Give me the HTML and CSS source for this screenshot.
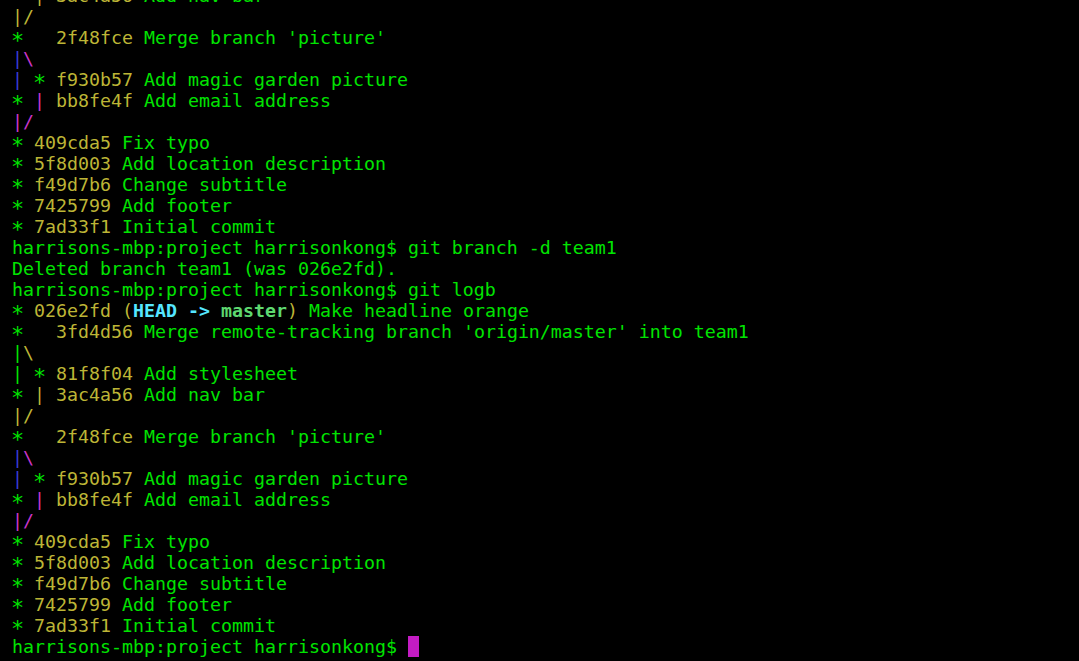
FILE: index.html
```html
<!DOCTYPE html>
<html>
<head>
<meta charset="utf-8">
<link rel="stylesheet" href="styles.css">
</head>
<body>
<pre class="term"><span class="g a">*</span> <span class="y">|</span> <span class="y">3ac4a56</span> <span class="g">Add nav bar</span>
<span class="y">|/</span>
<span class="g a">*</span>   <span class="y">2f48fce</span> <span class="g">Merge branch 'picture'</span>
<span class="b">|</span><span class="m">\</span>
<span class="b">|</span> <span class="g a">*</span> <span class="y">f930b57</span> <span class="g">Add magic garden picture</span>
<span class="g a">*</span> <span class="m">|</span> <span class="y">bb8fe4f</span> <span class="g">Add email address</span>
<span class="m">|/</span>
<span class="g a">*</span> <span class="y">409cda5</span> <span class="g">Fix typo</span>
<span class="g a">*</span> <span class="y">5f8d003</span> <span class="g">Add location description</span>
<span class="g a">*</span> <span class="y">f49d7b6</span> <span class="g">Change subtitle</span>
<span class="g a">*</span> <span class="y">7425799</span> <span class="g">Add footer</span>
<span class="g a">*</span> <span class="y">7ad33f1</span> <span class="g">Initial commit</span>
<span class="g">harrisons-mbp:project harrisonkong$ git branch -d team1</span>
<span class="g">Deleted branch team1 (was 026e2fd).</span>
<span class="g">harrisons-mbp:project harrisonkong$ git logb</span>
<span class="g a">*</span> <span class="y">026e2fd (</span><span class="c">HEAD -&gt; </span><span class="gb">master</span><span class="y">)</span> <span class="g">Make headline orange</span>
<span class="g a">*</span>   <span class="y">3fd4d56</span> <span class="g">Merge remote-tracking branch 'origin/master' into team1</span>
<span class="g">|</span><span class="y">\</span>
<span class="g">|</span> <span class="g a">*</span> <span class="y">81f8f04</span> <span class="g">Add stylesheet</span>
<span class="g a">*</span> <span class="y">|</span> <span class="y">3ac4a56</span> <span class="g">Add nav bar</span>
<span class="y">|/</span>
<span class="g a">*</span>   <span class="y">2f48fce</span> <span class="g">Merge branch 'picture'</span>
<span class="b">|</span><span class="m">\</span>
<span class="b">|</span> <span class="g a">*</span> <span class="y">f930b57</span> <span class="g">Add magic garden picture</span>
<span class="g a">*</span> <span class="m">|</span> <span class="y">bb8fe4f</span> <span class="g">Add email address</span>
<span class="m">|/</span>
<span class="g a">*</span> <span class="y">409cda5</span> <span class="g">Fix typo</span>
<span class="g a">*</span> <span class="y">5f8d003</span> <span class="g">Add location description</span>
<span class="g a">*</span> <span class="y">f49d7b6</span> <span class="g">Change subtitle</span>
<span class="g a">*</span> <span class="y">7425799</span> <span class="g">Add footer</span>
<span class="g a">*</span> <span class="y">7ad33f1</span> <span class="g">Initial commit</span>
<span class="g">harrisons-mbp:project harrisonkong$ </span><span class="cursor"> </span></pre>
</body>
</html>
```
FILE: styles.css
```css
html, body {
  margin: 0;
  padding: 0;
  background: #000;
  height: 100%;
  overflow: hidden;
}
.term {
  margin: -15px 0 0 0;
  padding: 0 0 0 12px;
  font-family: "DejaVu Sans Mono", "Liberation Mono", monospace;
  font-size: 18.27px;
  line-height: 21px;
  color: #00e400;
  white-space: pre;
}
.g { color: #00e400; }
.a {
  display: inline-block;
  transform: translateY(3px) scale(1.2);
}
.y { color: #bdb536; }
.b { color: #3a3ad0; }
.m { color: #c834c8; }
.c { color: #55e6ff; font-weight: bold; }
.gb { color: #5ed870; font-weight: bold; }
.cursor {
  display: inline-block;
  width: 11px;
  height: 21px;
  background: #c41cc4;
  vertical-align: top;
}
```
